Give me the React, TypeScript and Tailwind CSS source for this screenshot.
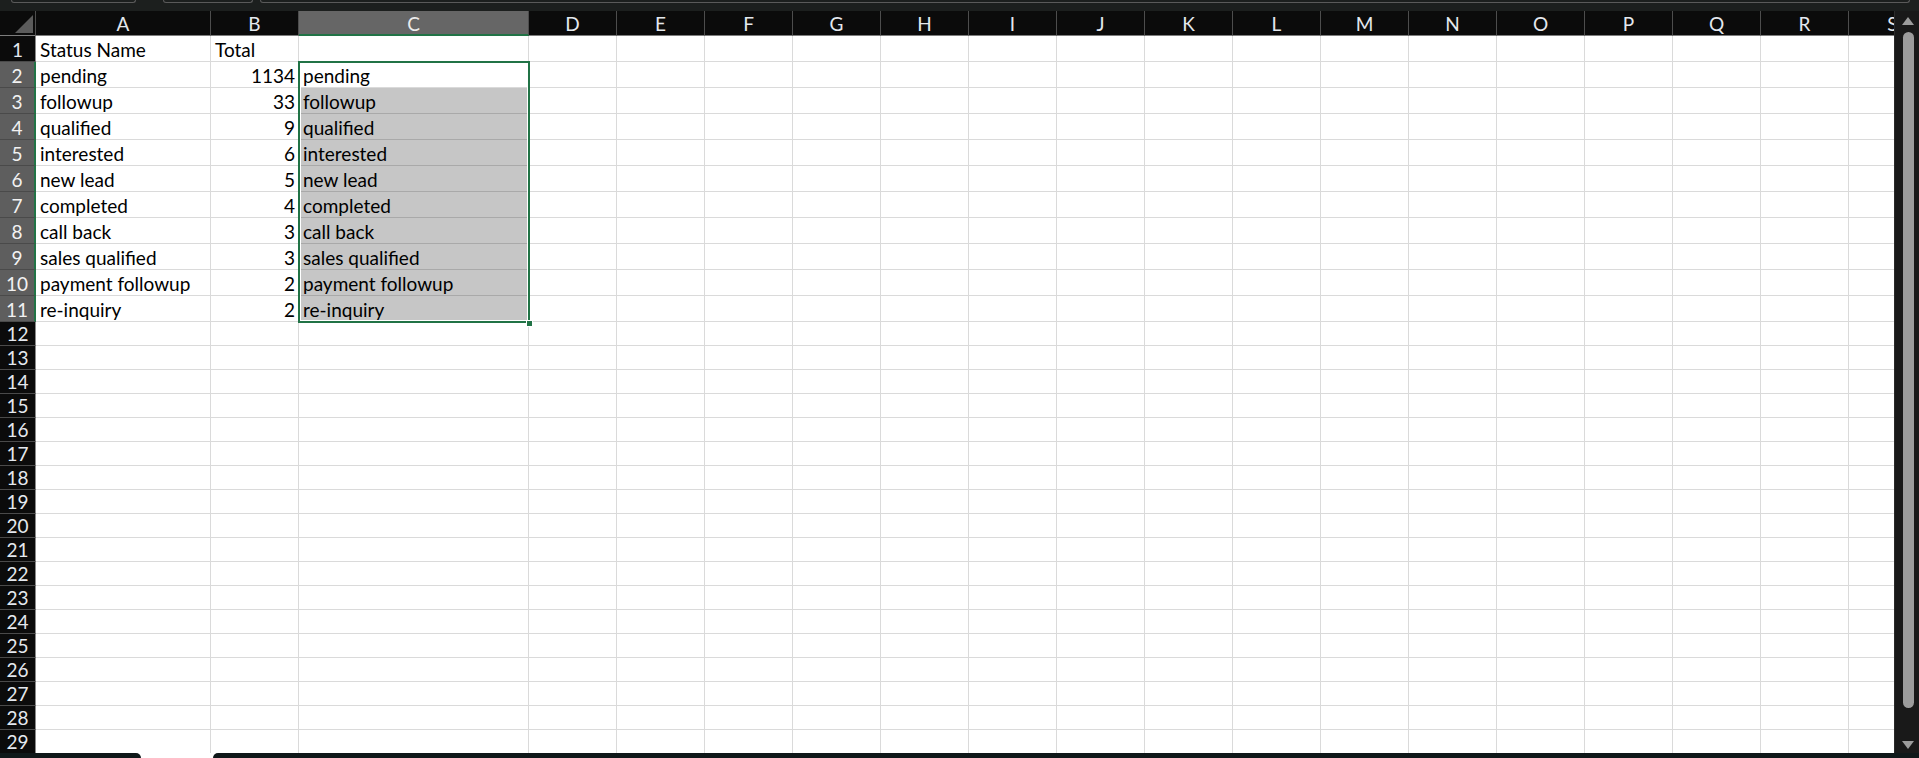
import React from "react";

const COLS = ["A", "B", "C", "D", "E", "F", "G", "H", "I", "J", "K", "L", "M", "N", "O", "P", "Q", "R", "S"];

const DATA: [string, string][] = [
  ["pending", "1134"],
  ["followup", "33"],
  ["qualified", "9"],
  ["interested", "6"],
  ["new lead", "5"],
  ["completed", "4"],
  ["call back", "3"],
  ["sales qualified", "3"],
  ["payment followup", "2"],
  ["re-inquiry", "2"],
];

const ROW_COUNT = 29;

const font = { fontFamily: "Lato, 'Open Sans', sans-serif" };

function ColumnHeader({ label }: { label: string }) {
  const active = label === "C";
  return (
    <div
      className={
        active
          ? "flex items-end justify-center border-r border-b-2 border-r-[#4d4d4d] border-b-[#217346] bg-[#666666] pb-[1px] text-[19px] leading-[19px] text-[#ececec]"
          : "flex items-end justify-center border-r border-b border-r-[#4d4d4d] border-b-[#7d7d7d] bg-[#0b0b0b] pb-[2px] text-[19px] leading-[19px] text-[#e4e8ee]"
      }
    >
      {label}
    </div>
  );
}

function RowHeader({ n }: { n: number }) {
  const active = n >= 2 && n <= 11;
  return (
    <div
      className={
        active
          ? "flex items-end justify-center border-b border-r-2 border-b-[#4a4a4a] border-r-[#217346] bg-[#5e5e5e] pb-[2px] text-[19px] leading-[19px] text-[#f2f2f2]"
          : "flex items-end justify-center border-b border-r border-b-[#4a4a4a] border-r-[#8a8a8a] bg-[#0b0b0b] pb-[2px] text-[19px] leading-[19px] text-[#e4e8ee]"
      }
    >
      {n}
    </div>
  );
}

function Cell({ text, align, tinted }: { text?: string; align?: "left" | "right"; tinted?: boolean }) {
  return (
    <div
      className={
        (tinted ? "bg-[#c6c6c6] border-b-[#a9a9a9] border-r-[#a9a9a9] " : "bg-white border-b-[#dadada] border-r-[#dadada] ") +
        "flex items-end overflow-visible whitespace-nowrap border-r border-b pb-[2px] text-[19px] leading-[19px] text-black " +
        (align === "right" ? "justify-end pr-[3px]" : "justify-start pl-[4px]")
      }
    >
      {text}
    </div>
  );
}

function TopStrip() {
  return (
    <div className="flex h-[11px] items-start gap-[7px] bg-[#1c1f1e] pl-[11px] pr-[9px]">
      <div className="h-[3px] w-[125px] rounded-b-[5px] border border-t-0 border-[#5a5a5a]" />
      <div className="ml-[20px] h-[3px] w-[90px] rounded-b-[5px] border border-t-0 border-[#5a5a5a]" />
      <div className="h-[3px] flex-1 rounded-b-[5px] border border-t-0 border-[#5a5a5a]" />
    </div>
  );
}

function Scrollbar() {
  return (
    <div className="flex w-[25px] flex-col items-center border-l border-[#2a2a2a] bg-[#191919] pl-[2px]">
      <svg width="12" height="9" viewBox="0 0 12 9" className="mt-[6px]">
        <path d="M6 0 L12 8 L0 8 Z" fill="#9c9c9c" />
      </svg>
      <div className="mt-[6px] h-[676px] w-[11px] rounded-full bg-[#9c9c9c]" />
      <div className="flex-1" />
      <svg width="12" height="9" viewBox="0 0 12 9" className="mb-[3px]">
        <path d="M0 0 L12 0 L6 8 Z" fill="#9c9c9c" />
      </svg>
    </div>
  );
}

function Sheet() {
  const rows = Array.from({ length: ROW_COUNT }, (_, i) => i + 1);
  return (
    <div className="relative h-[742px] w-[1894px] overflow-hidden bg-white" style={font}>
      <div className="grid w-max grid-cols-[36px_175px_88px_230px_repeat(16,88px)] grid-rows-[25px_repeat(11,26px)_repeat(18,24px)]">
        {/* corner */}
        <div className="relative border-r border-b border-r-[#4d4d4d] border-b-[#7d7d7d] bg-[#0b0b0b]">
          <svg width="18" height="18" viewBox="0 0 18 18" className="absolute left-[15px] top-[4px]">
            <path d="M18 0 L18 18 L0 18 Z" fill="#5b5b5b" />
          </svg>
        </div>
        {COLS.map((c) => (
          <ColumnHeader key={c} label={c} />
        ))}
        {rows.map((r) => {
          const entry = r >= 2 && r <= 11 ? DATA[r - 2] : undefined;
          return (
            <React.Fragment key={r}>
              <RowHeader n={r} />
              <Cell text={r === 1 ? "Status Name" : entry?.[0]} />
              <Cell text={r === 1 ? "Total" : entry?.[1]} align={r === 1 ? "left" : "right"} />
              <Cell text={entry?.[0]} tinted={r >= 3 && r <= 11} />
              {COLS.slice(3).map((c) => (
                <Cell key={c} />
              ))}
            </React.Fragment>
          );
        })}
      </div>
      {/* selection outline around C2:C11 */}
      <div className="pointer-events-none absolute left-[298px] top-[50px] h-[262px] w-[232px] border-2 border-[#217346] shadow-[inset_0_0_0_1px_#ffffff]" />
      <div className="pointer-events-none absolute left-[526px] top-[309px] h-[7px] w-[7px] border border-white bg-[#217346]" />
    </div>
  );
}

function BottomStrip() {
  return (
    <div className="flex h-[5px] bg-white">
      <div className="h-full w-[141px] rounded-tr-[6px] bg-[#0f1819]" />
      <div className="ml-[72px] h-full flex-1 rounded-tl-[6px] bg-[#0f1819]" />
    </div>
  );
}

export default function App() {
  return (
    <div className="h-[758px] w-[1919px] overflow-hidden bg-[#1c1f1e]">
      <TopStrip />
      <div className="flex h-[742px]">
        <Sheet />
        <Scrollbar />
      </div>
      <BottomStrip />
    </div>
  );
}
